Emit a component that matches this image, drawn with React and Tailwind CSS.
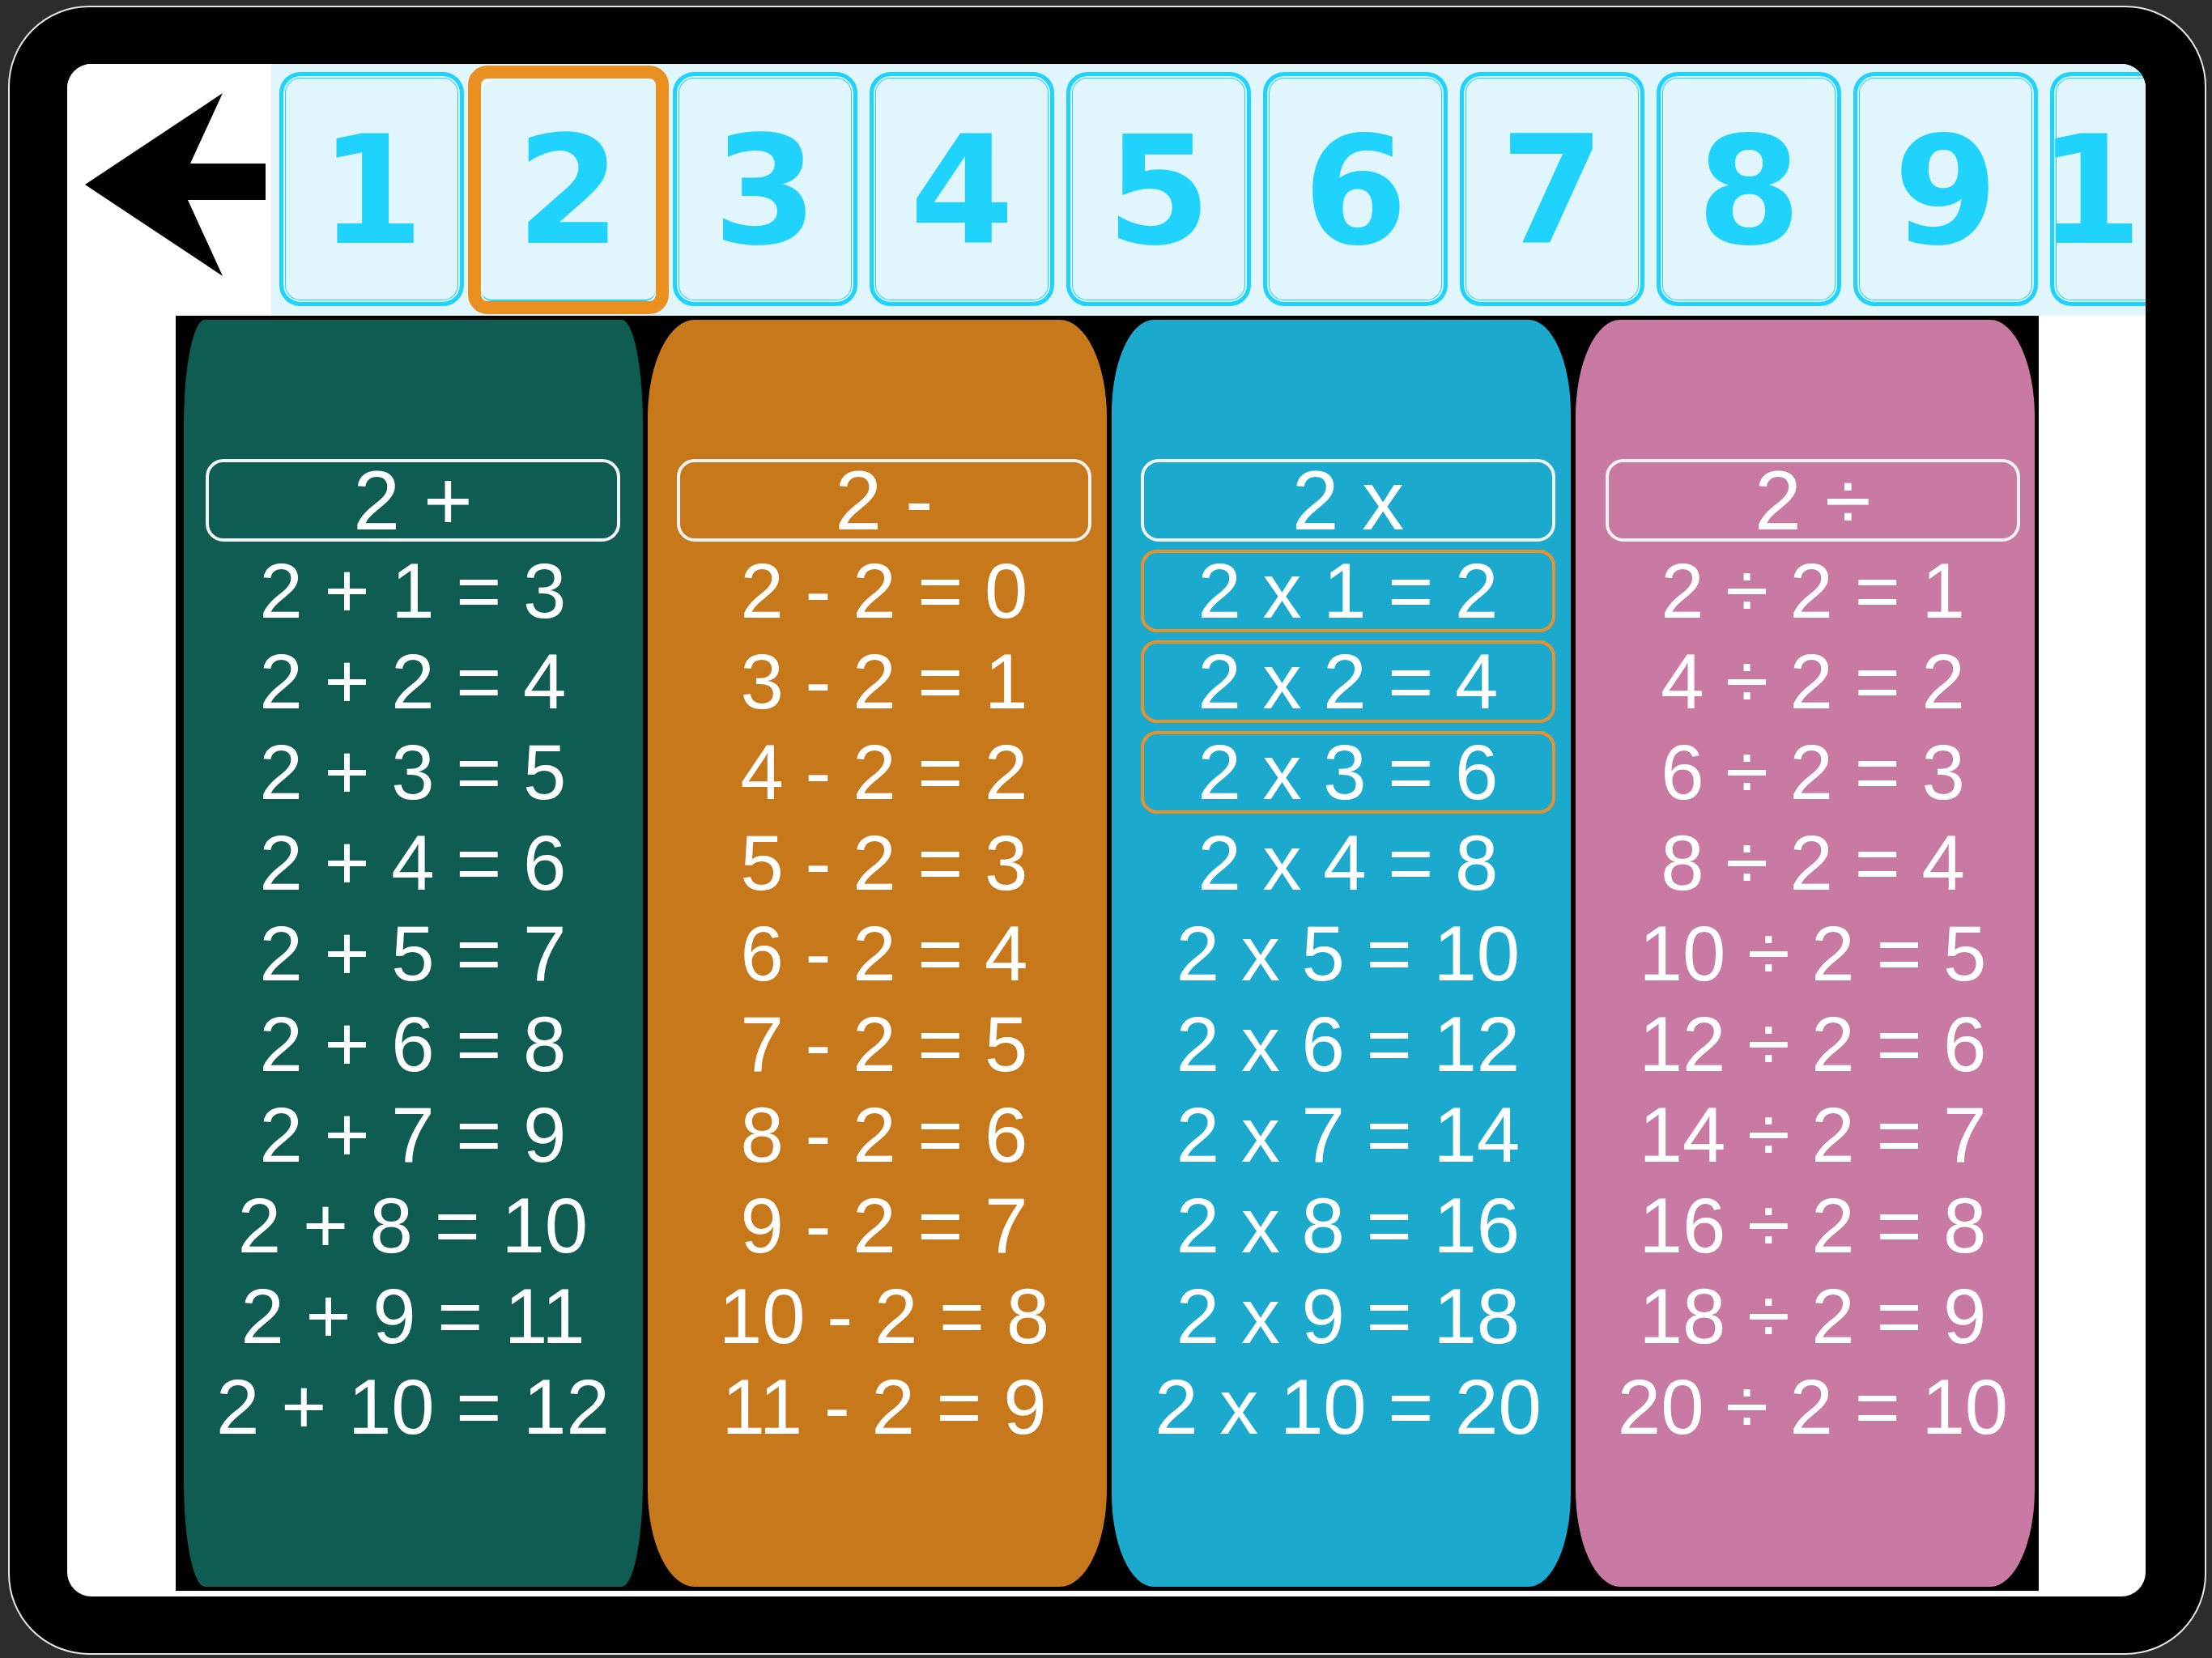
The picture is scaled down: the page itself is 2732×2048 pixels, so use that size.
import React from "react";

const NUMBERS = [1, 2, 3, 4, 5, 6, 7, 8, 9, 10];

const COLUMNS = [
  {
    title: "2 +",
    bg: "bg-[#0f5c53]",
    shape: "rounded-[26px/130px]",
    pad: "pl-[27px]",
    rows: NUMBERS.map((n) => `2 + ${n} = ${n + 2}`),
  },
  {
    title: "2 -",
    bg: "bg-[#c7781a]",
    shape: "rounded-[58px/120px]",
    pad: "pl-[36px]",
    rows: NUMBERS.map((n) => `${n + 1} - 2 = ${n - 1}`),
  },
  {
    title: "2 x",
    bg: "bg-[#1baacd]",
    shape: "rounded-[52px/115px]",
    pad: "pl-[36px]",
    rows: NUMBERS.map((n) => `2 x ${n} = ${n * 2}`),
    marked: 3,
  },
  {
    title: "2 ÷",
    bg: "bg-[#c87aa3]",
    shape: "rounded-[55px/120px]",
    pad: "pl-[37px]",
    rows: NUMBERS.map((n) => `${n * 2} ÷ 2 = ${n}`),
  },
];

function BackArrow() {
  return (
    <svg width="252" height="311" viewBox="0 0 252 311">
      <polygon points="22,149 192,36 152,123 245,123 245,168 149,168 192,262" fill="#000" />
    </svg>
  );
}

function NumberTile({ n, selected }) {
  if (selected) {
    return (
      <div className="shrink-0 w-[248px] h-[307px] -mx-[10px] -mt-[8px] -mb-[10px] rounded-[24px] border-[16px] border-[#ea9020] bg-[#e1f5fd] flex items-center justify-center">
        <div className="w-full h-full rounded-[14px] border-b-2 border-[#1fd3fd] shadow-[inset_2px_2px_0_0_#ffffff] flex items-center justify-center">
          <span className="mt-[6px] font-['DejaVu_Sans',sans-serif] font-bold text-[185px] leading-none text-[#20d3fd]">{n}</span>
        </div>
      </div>
    );
  }
  return (
    <div className="shrink-0 w-[228px] h-[289px] rounded-[26px] border-[5px] border-[#1fd3fd] bg-[#e1f5fd] shadow-[inset_0_0_0_2px_#e1f5fd,inset_0_0_0_3px_#1fd3fd] flex items-center justify-center">
      <span className="mt-[6px] font-['DejaVu_Sans',sans-serif] font-bold text-[185px] leading-none text-[#20d3fd] whitespace-nowrap">{n}</span>
    </div>
  );
}

function Column({ col }) {
  return (
    <div className={`w-[567px] h-[1565px] shrink-0 ${col.bg} ${col.shape} ${col.pad} pt-[172px]`}>
      <div className="w-[512px] flex flex-col gap-[10px] font-['Liberation_Sans',Arial,sans-serif] text-white">
        <div className="h-[102px] rounded-[22px] border-4 border-[#f2f2f2] flex items-center justify-center text-[104px] leading-none">
          {col.title}
        </div>
        {col.rows.map((r, i) => (
          <div
            key={r}
            className={`h-[102px] rounded-[20px] border-4 flex items-center justify-center text-[96px] leading-none whitespace-nowrap ${
              col.marked && i < col.marked ? "border-[#e8912a]" : "border-transparent"
            }`}
          >
            {r}
          </div>
        ))}
      </div>
    </div>
  );
}

export default function App() {
  return (
    <div className="w-[2732px] h-[2048px] bg-[#2c2c2c] pt-[7px] pl-[10px] overflow-hidden">
      <div className="w-[2715px] h-[2037px] rounded-[100px] border-2 border-[#e6e6e6] bg-black pt-[70px] pl-[71px]">
        <div className="w-[2567px] h-[1893px] bg-white rounded-[30px] overflow-hidden flex flex-col">
          {/* top bar: back arrow + number picker */}
          <div className="flex h-[311px] shrink-0">
            <div className="w-[252px] shrink-0 bg-white">
              <BackArrow />
            </div>
            <div className="flex-1 bg-[#e1f5fd] flex items-start gap-[15px] pl-[10px] pt-[10px] overflow-hidden">
              {NUMBERS.map((n) => (
                <NumberTile key={n} n={n} selected={n === 2} />
              ))}
            </div>
          </div>

          {/* operation tables */}
          <div className="ml-[134px] w-[2301px] h-[1575px] bg-black flex gap-[6px] pl-[10px] pt-[5px]">
            {COLUMNS.map((c) => (
              <Column key={c.title} col={c} />
            ))}
          </div>
        </div>
      </div>
    </div>
  );
}
